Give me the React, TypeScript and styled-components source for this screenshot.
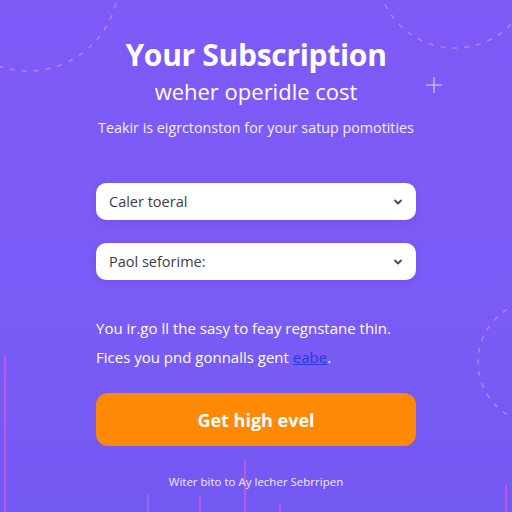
import React from "react"
import styled, { createGlobalStyle } from "styled-components"

const GlobalStyle = createGlobalStyle`
    html, body {
        margin: 0;
        padding: 0;
    }
    body {
        font-family: "Open Sans", "Lato", sans-serif;
        background: #7a5af6;
    }
`

const Page = styled.main`
    position: relative;
    overflow: hidden;
    width: 512px;
    height: 512px;
    box-sizing: border-box;
    padding-top: 37px;
    background: linear-gradient(180deg, #7e5af7 0%, #7a5bf6 60%, #7458f2 100%);
    color: #ffffff;
`

const Decor = styled.svg`
    position: absolute;
    inset: 0;
    pointer-events: none;
`

const Column = styled.div`
    position: relative;
    width: 320px;
    margin: 0 auto;
    display: flex;
    flex-direction: column;
`

const Title = styled.h1`
    margin: 0;
    font-size: 30px;
    line-height: 36px;
    font-weight: 700;
    text-align: center;
    letter-spacing: -0.3px;
`

const Subtitle = styled.h2`
    margin: 4px 0 0;
    font-size: 22px;
    line-height: 28px;
    font-weight: 500;
    text-align: center;
`

const Lead = styled.p`
    margin: 13px -20px 0;
    font-size: 14.3px;
    line-height: 20px;
    text-align: center;
    color: #f3efff;
`

const Fields = styled.div`
    display: flex;
    flex-direction: column;
    gap: 23px;
    margin-top: 45px;
`

const Select = styled.button`
    display: flex;
    align-items: center;
    justify-content: space-between;
    height: 37px;
    padding: 0 12px 0 13px;
    border: none;
    border-radius: 10px;
    background: #ffffff;
    font-family: inherit;
    font-size: 14.5px;
    color: #3e3b4e;
    box-shadow: 0 2px 6px rgba(60, 30, 160, 0.15);
`

const Body = styled.p`
    margin: 34px 0 0;
    font-size: 15px;
    line-height: 29px;
    color: #ffffff;
`

const InlineLink = styled.a`
    color: #2a3ad8;
    text-decoration: underline;
`

const CallToAction = styled.button`
    margin-top: 21px;
    height: 53px;
    border: none;
    border-radius: 12px;
    background: #fd8905;
    color: #ffffff;
    font-family: inherit;
    font-size: 18px;
    font-weight: 700;
`

const Footnote = styled.p`
    margin: 28px 0 0;
    font-size: 11.5px;
    line-height: 16px;
    text-align: center;
    color: #f0ebff;
`

const Chevron = () => (
    <svg width="12" height="12" viewBox="0 0 12 12">
        <path d="M3 4.5 L6 7.5 L9 4.5" fill="none" stroke="#4a4560" strokeWidth="1.8" strokeLinecap="round" strokeLinejoin="round" />
    </svg>
)

const Background = () => (
    <Decor width="512" height="512" viewBox="0 0 512 512">
        <g fill="none" stroke="#cf8ce4" strokeWidth="1.5" strokeDasharray="5 7" opacity="0.75">
            <circle cx="28" cy="-20" r="91" />
            <circle cx="455" cy="-30" r="78" />
            <circle cx="540" cy="362" r="62" />
        </g>
        <g stroke="#e6dcff" strokeWidth="1.3" opacity="0.8">
            <line x1="434" y1="77" x2="434" y2="93" />
            <line x1="426" y1="85" x2="442" y2="85" />
        </g>
        <g stroke="#c25ce0" strokeWidth="2.2" opacity="0.8">
            <line x1="5" y1="355" x2="5" y2="512" />
            <line x1="245" y1="460" x2="245" y2="512" />
            <line x1="200" y1="495" x2="200" y2="512" />
            <line x1="280" y1="505" x2="280" y2="512" />
            <line x1="506" y1="485" x2="506" y2="512" />
        </g>
        <line x1="148" y1="495" x2="148" y2="512" stroke="#8f6ff0" strokeWidth="2" />
    </Decor>
)

export default function App() {
    return (
        <>
            <GlobalStyle />
            <Page>
                <Background />
                <Column>
                    <Title>Your Subscription</Title>
                    <Subtitle>weher operidle cost</Subtitle>
                    <Lead>Teakir is eigrctonston for your satup pomotities</Lead>
                    <Fields>
                        <Select type="button">
                            <span>Caler toeral</span>
                            <Chevron />
                        </Select>
                        <Select type="button">
                            <span>Paol seforime:</span>
                            <Chevron />
                        </Select>
                    </Fields>
                    <Body>
                        You ir.go ll the sasy to feay regnstane thin.
                        <br />
                        Fices you pnd gonnalls gent <InlineLink href="#">eabe</InlineLink>.
                    </Body>
                    <CallToAction type="button">Get high evel</CallToAction>
                    <Footnote>Witer bito to Ay lecher Sebrripen</Footnote>
                </Column>
            </Page>
        </>
    )
}
